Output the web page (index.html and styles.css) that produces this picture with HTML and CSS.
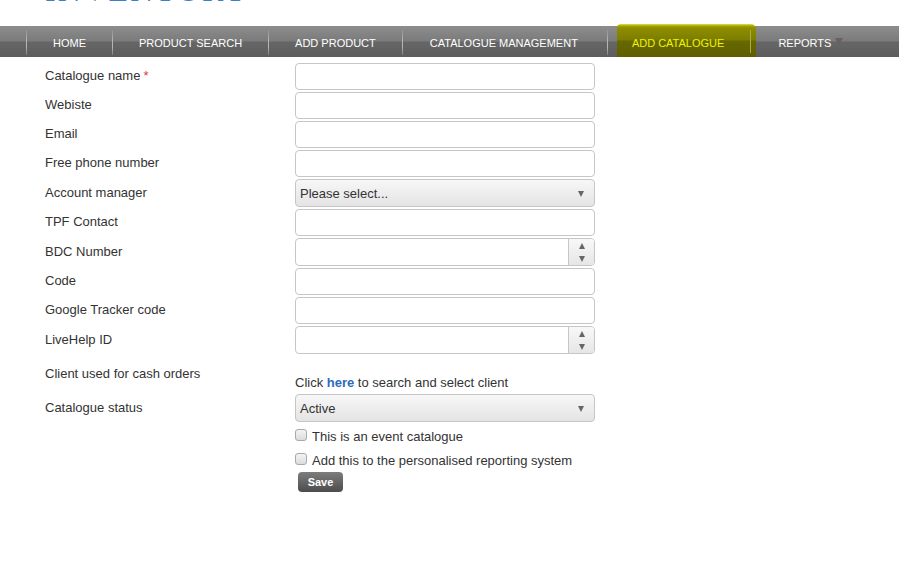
FILE: index.html
```html
<!DOCTYPE html>
<html>
<head>
<meta charset="utf-8">
<link rel="stylesheet" href="styles.css">
</head>
<body>
<header class="header">
  <div class="logo">INVENTORY</div>
</header>
<nav class="nav">
  <a class="nav-item">HOME</a>
  <a class="nav-item">PRODUCT SEARCH</a>
  <a class="nav-item">ADD PRODUCT</a>
  <a class="nav-item wide">CATALOGUE MANAGEMENT</a>
  <a class="nav-item active"><span class="hl"></span><span class="hl-text">ADD CATALOGUE</span></a>
  <a class="nav-item last">REPORTS <span class="caret"></span></a>
</nav>
<form class="form">
  <label class="lbl">Catalogue name <span class="req">*</span></label>
  <div class="ctl"><input class="inp" type="text"></div>

  <label class="lbl">Webiste</label>
  <div class="ctl"><input class="inp" type="text"></div>

  <label class="lbl">Email</label>
  <div class="ctl"><input class="inp" type="text"></div>

  <label class="lbl">Free phone number</label>
  <div class="ctl"><input class="inp" type="text"></div>

  <label class="lbl">Account manager</label>
  <div class="ctl"><div class="sel"><span>Please select...</span><span class="arrow-down"></span></div></div>

  <label class="lbl">TPF Contact</label>
  <div class="ctl"><input class="inp" type="text"></div>

  <label class="lbl">BDC Number</label>
  <div class="ctl"><div class="num"><span class="num-field"></span><span class="spin"><span class="arrow-up"></span><span class="arrow-down"></span></span></div></div>

  <label class="lbl">Code</label>
  <div class="ctl"><input class="inp" type="text"></div>

  <label class="lbl">Google Tracker code</label>
  <div class="ctl"><input class="inp" type="text"></div>

  <label class="lbl">LiveHelp ID</label>
  <div class="ctl"><div class="num"><span class="num-field"></span><span class="spin"><span class="arrow-up"></span><span class="arrow-down"></span></span></div></div>

  <label class="lbl lbl-top">Client used for cash orders</label>
  <div class="ctl ctl-text">Click <a class="link">here</a> to search and select client</div>

  <label class="lbl">Catalogue status</label>
  <div class="ctl"><div class="sel"><span>Active</span><span class="arrow-down"></span></div></div>

  <div class="empty"></div>
  <div class="checks">
    <label class="chk"><input type="checkbox" class="box"> This is an event catalogue</label>
    <label class="chk"><input type="checkbox" class="box"> Add this to the personalised reporting system</label>
    <button type="button" class="save">Save</button>
  </div>
</form>
</body>
</html>
```

FILE: styles.css
```css
* { box-sizing: border-box; }
html, body { margin: 0; padding: 0; background: #fff; }
body {
  font-family: "Liberation Sans", Arial, sans-serif;
  font-size: 13px;
  color: #333;
  width: 899px;
  height: 566px;
  overflow: hidden;
}
.header {
  height: 26px;
  overflow: hidden;
  padding-left: 45px;
}
.logo {
  margin-top: -26px;
  font-family: "Liberation Serif", "Times New Roman", serif;
  font-size: 32px;
  line-height: 32px;
  letter-spacing: 2.2px;
  color: #3d7fc6;
}
.nav {
  display: flex;
  height: 31px;
  align-items: stretch;
  padding-left: 26px;
  background: linear-gradient(#8d8d8d 0%, #7b7b7b 48%, #666 52%, #5d5d5d 100%);
}
.nav-item {
  display: flex;
  align-items: center;
  padding: 3px 26px 0 27px;
  color: #fff;
  font-size: 11px;
  text-decoration: none;
  position: relative;
}
.nav-item.wide { padding-left: 28px; padding-right: 29px; }
.nav-item::before {
  content: "";
  position: absolute;
  left: 0;
  top: 4px;
  bottom: 2px;
  width: 1px;
  background: linear-gradient(rgba(200,200,200,0.2), #b5b5b5 40%, #b5b5b5 70%, rgba(200,200,200,0.3));
}
.nav-item.last::before { display: none; }
.nav-item.last { padding-left: 22px; }
.nav-item.active {
  color: #f2f200;
  padding-left: 25px;
  padding-right: 32px;
}
.hl {
  position: absolute;
  left: 10px;
  right: 0;
  top: -2px;
  bottom: 0;
  border-radius: 4px 5px 0 0;
  background: linear-gradient(#e2e24a 0px, #a4a400 2px, #8e8e00 4px, #7d7d00 48%, #686800 52%, #5e5e00 100%);
}
.hl::after {
  content: "";
  position: absolute;
  right: 5px;
  top: 6px;
  bottom: 4px;
  width: 1px;
  background: #a9a950;
}
.hl-text { position: relative; }
.caret {
  display: inline-block;
  width: 0;
  height: 0;
  margin-left: 4px;
  border-left: 4px solid transparent;
  border-right: 4px solid transparent;
  border-top: 7px solid #6b6060;
  position: relative;
  top: -2px;
}
.form {
  display: grid;
  grid-template-columns: 250px 300px;
  row-gap: 2px;
  margin: 6px 0 0 45px;
}
.lbl {
  display: flex;
  align-items: center;
  line-height: 18px;
  padding-bottom: 1px;
}
.lbl-top { align-items: flex-start; padding-top: 9px; }
.req { color: #e0383a; margin-left: 3px; }
.ctl { display: block; }
.ctl-text { padding-top: 18px; padding-bottom: 0; line-height: 18px; }
.link { color: #2c6bbd; font-weight: bold; text-decoration: none; }
.inp {
  display: block;
  width: 300px;
  height: 27px;
  margin: 0;
  border: 1px solid #c6c6c6;
  border-radius: 4px;
  background: #fff;
  font: inherit;
}
.sel {
  display: flex;
  align-items: center;
  justify-content: space-between;
  height: 28px;
  padding: 0 10px 0 4px;
  border: 1px solid #c6c6c6;
  border-radius: 4px;
  background: linear-gradient(#f7f7f7, #e4e4e4);
  color: #333;
}
.sel .arrow-down { margin-top: 2px; }
.arrow-down {
  display: block;
  width: 0;
  height: 0;
  border-left: 3.5px solid transparent;
  border-right: 3.5px solid transparent;
  border-top: 6px solid #666;
}
.arrow-up {
  display: block;
  width: 0;
  height: 0;
  border-left: 3.5px solid transparent;
  border-right: 3.5px solid transparent;
  border-bottom: 6px solid #666;
}
.num {
  display: flex;
  height: 28px;
  border: 1px solid #c6c6c6;
  border-radius: 4px;
  overflow: hidden;
  background: #fff;
}
.num-field { flex: 1; }
.spin {
  width: 26px;
  display: flex;
  flex-direction: column;
  align-items: center;
  justify-content: center;
  gap: 7px;
  border-left: 1px solid #c6c6c6;
  background: linear-gradient(#f8f8f8, #e6e6e6);
}
.checks {
  display: flex;
  flex-direction: column;
  align-items: flex-start;
}
.chk {
  display: flex;
  align-items: center;
  height: 24px;
}
.box {
  appearance: none;
  -webkit-appearance: none;
  width: 12px;
  height: 12px;
  margin: -2px 5px 0 0;
  border: 1px solid #a9a9a9;
  border-radius: 3px;
  background: linear-gradient(#f4f4f4, #dcdcdc);
}
.save {
  margin: 0 0 0 3px;
  width: 45px;
  height: 20px;
  padding: 0;
  border: none;
  border-radius: 4px;
  background: linear-gradient(#7d7d7d, #4c4c4c);
  color: #fff;
  font-family: "Liberation Sans", Arial, sans-serif;
  font-weight: bold;
  font-size: 11px;
}
```
